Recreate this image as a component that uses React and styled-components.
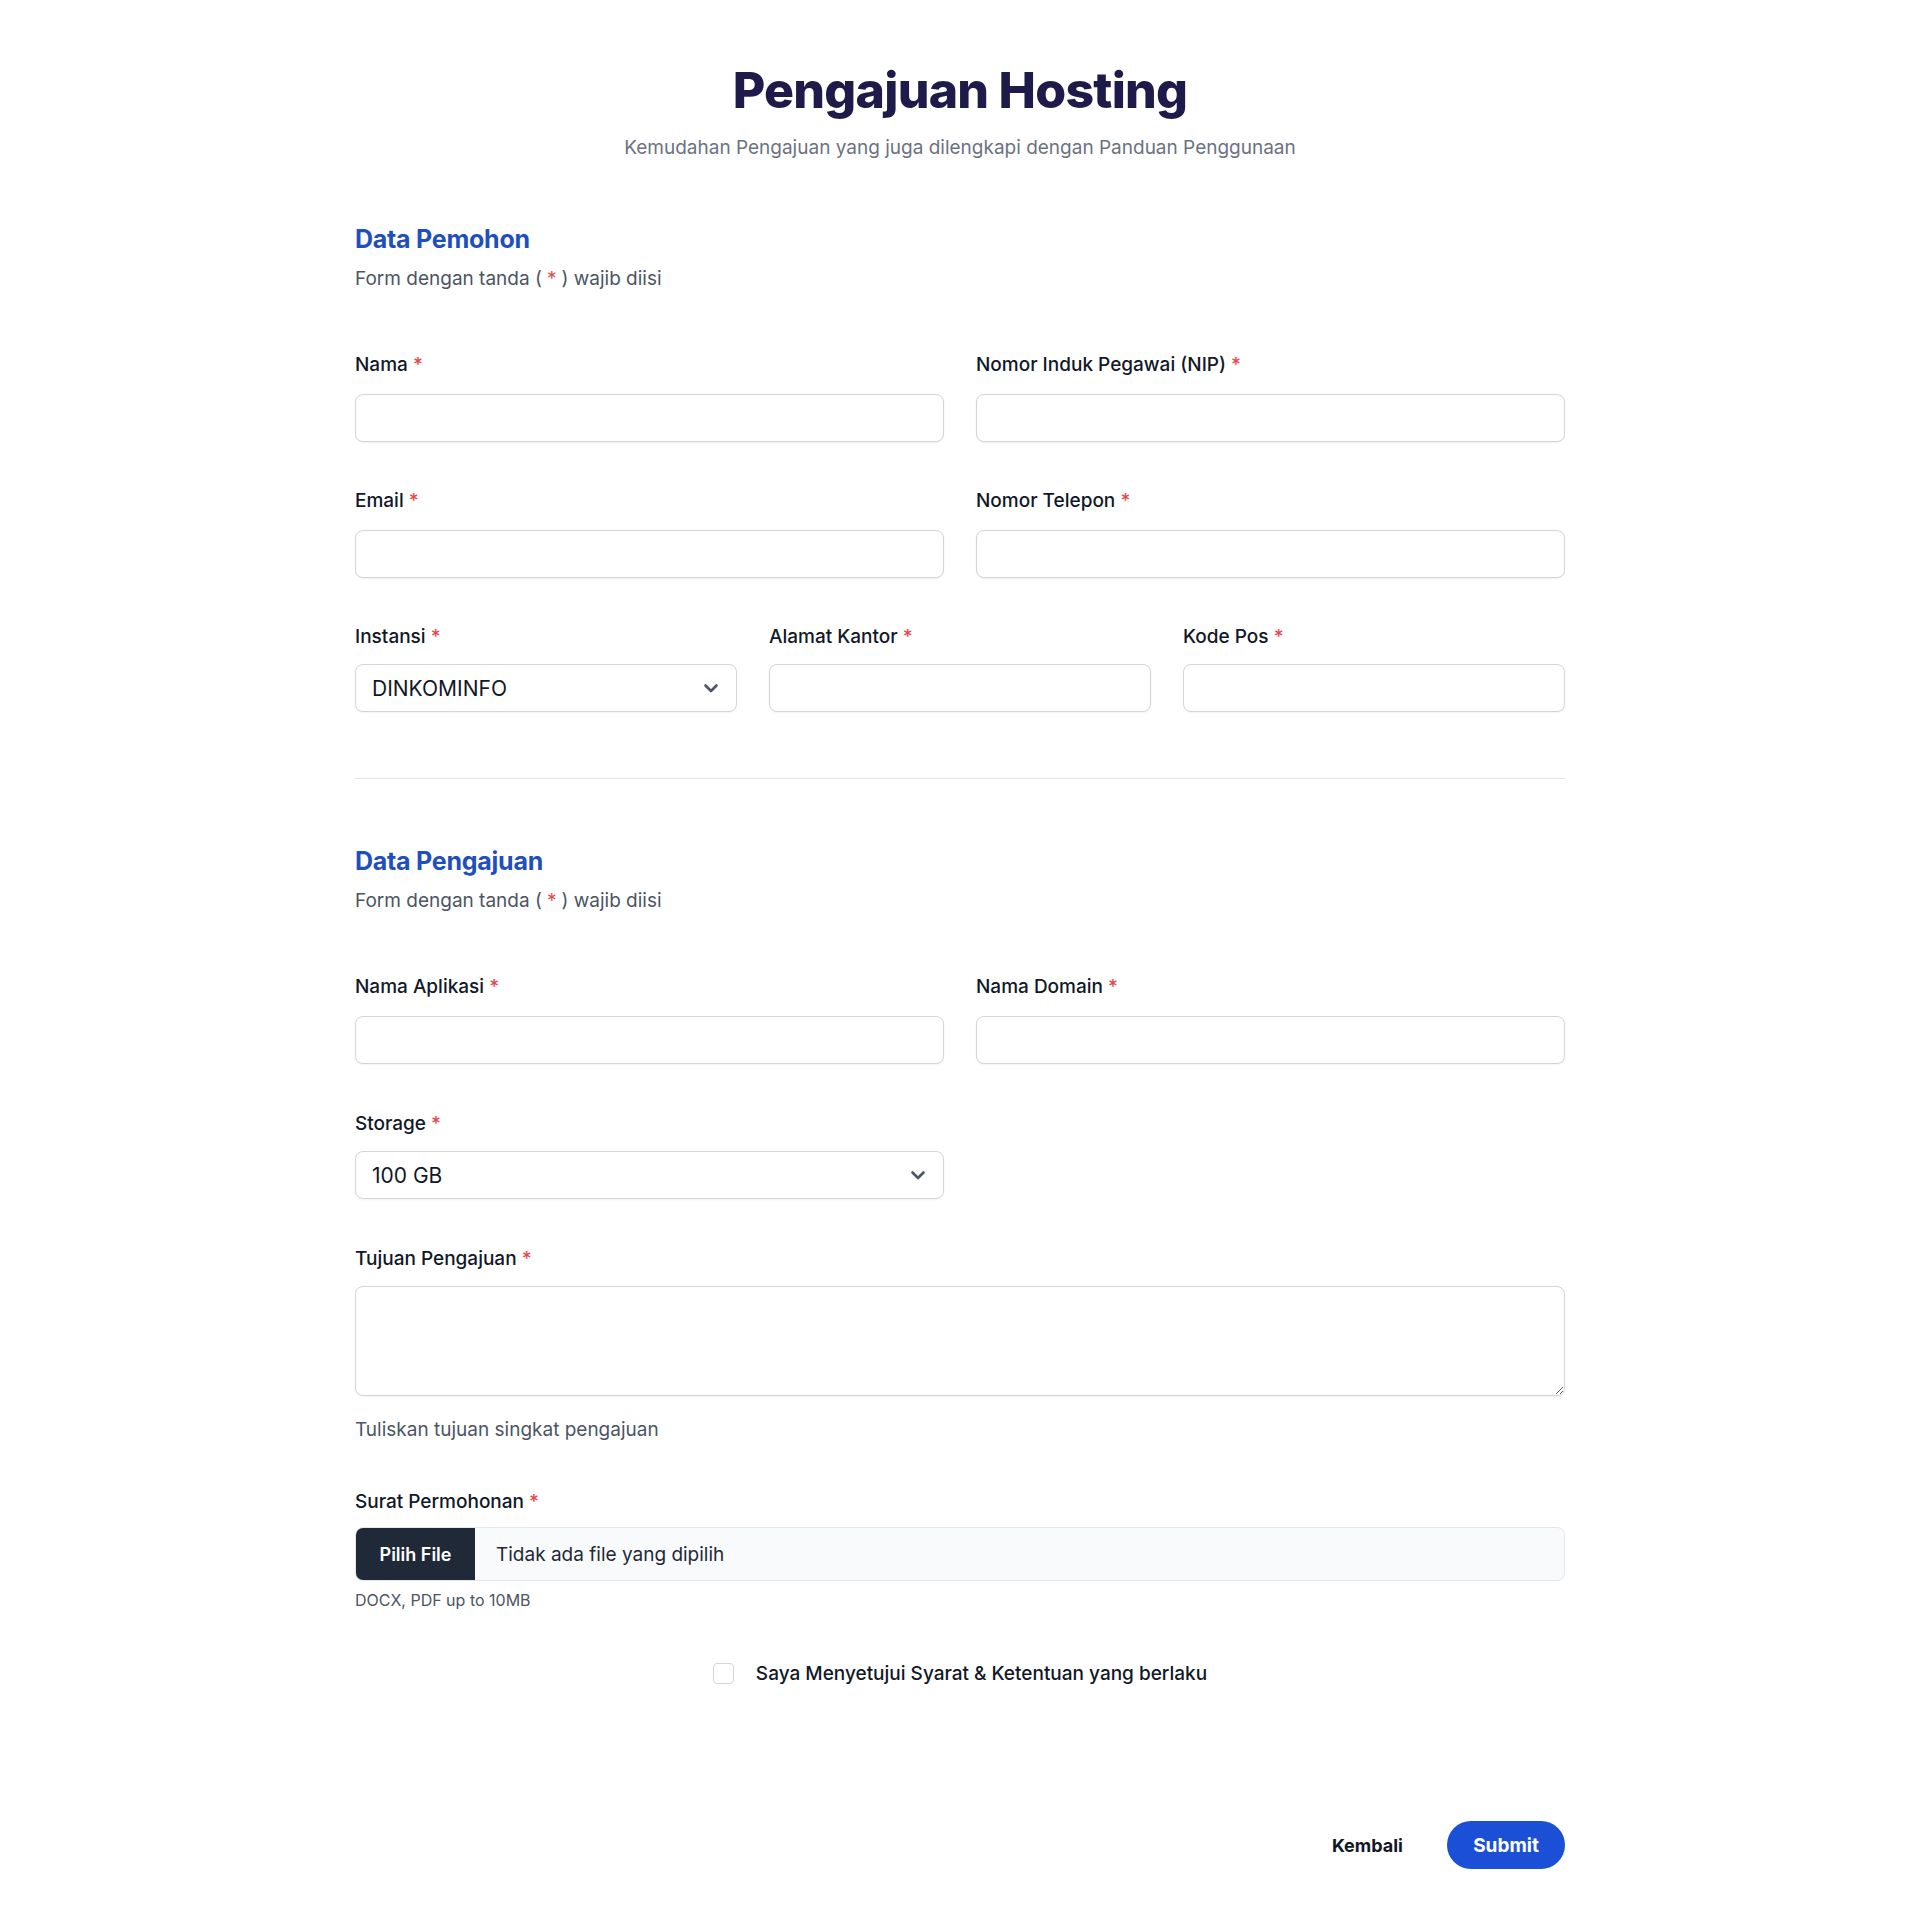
import React from "react";
import styled, { createGlobalStyle } from "styled-components";

const Global = createGlobalStyle`
  html, body { margin: 0; padding: 0; background: #ffffff; }
  body { font-family: Inter, "Noto Sans", "Liberation Sans", sans-serif; color: #111827; }
  * { box-sizing: border-box; }
`;

const Page = styled.main`
  width: 1210px;
  margin: 0 auto;
  padding: 61px 0 43px;
  display: flex;
  flex-direction: column;
`;

const Header = styled.header`
  display: flex;
  flex-direction: column;
  align-items: center;
  gap: 17px;
  margin-bottom: 63px;
`;

const Title = styled.h1`
  margin: 0;
  font-size: 50px;
  line-height: 58px;
  font-weight: 800;
  letter-spacing: -0.015em;
  color: #1e1b4b;
`;

const Subtitle = styled.p`
  margin: 0;
  font-size: 19px;
  line-height: 24px;
  color: #6b7280;
`;

const Section = styled.section`
  display: flex;
  flex-direction: column;
`;

const SectionTitle = styled.h2`
  margin: 0;
  font-size: 25px;
  line-height: 32px;
  font-weight: 700;
  color: #1f4fbf;
  letter-spacing: -0.01em;
`;

const SectionNote = styled.p`
  margin: 12px 0 62px;
  font-size: 19px;
  line-height: 24px;
  color: #4b5563;
`;

const Star = styled.span`
  color: #e5484d;
  margin: 0 ${(p) => (p.$inline ? "5px" : "0")};
`;

const Grid = styled.div`
  display: grid;
  grid-template-columns: repeat(${(p) => p.$cols}, 1fr);
  column-gap: 32px;
  row-gap: ${(p) => p.$gap || 47}px;
  margin-bottom: ${(p) => p.$mb || 0}px;
`;

const Field = styled.div`
  display: flex;
  flex-direction: column;
  grid-column: span ${(p) => p.$span || 1};
`;

const Label = styled.label`
  font-size: 19px;
  line-height: 24px;
  font-weight: 500;
  color: #111827;
  margin-bottom: ${(p) => p.$mb ?? 17}px;
`;

const Input = styled.input`
  height: 48px;
  width: 100%;
  border: 1px solid #d1d5db;
  border-radius: 8px;
  background: #fff;
  box-shadow: 0 1px 2px rgba(0, 0, 0, 0.05);
  padding: 0 16px;
  font-family: inherit;
  font-size: 20px;
  outline: none;
`;

const SelectWrap = styled.div`
  height: 48px;
  border: 1px solid #d1d5db;
  border-radius: 8px;
  background: #fff;
  box-shadow: 0 1px 2px rgba(0, 0, 0, 0.05);
  display: flex;
  align-items: center;
  justify-content: space-between;
  padding: 0 15px 0 16px;
  font-size: 21px;
  color: #111827;
`;

const Chevron = () => (
  <svg width="20" height="20" viewBox="0 0 20 20" fill="none">
    <path d="M4.5 7.5l5.5 5.5 5.5-5.5" stroke="#4b5563" strokeWidth="2.6" strokeLinecap="round" strokeLinejoin="round" />
  </svg>
);

const Select = ({ value }) => (
  <SelectWrap>
    <span>{value}</span>
    <Chevron />
  </SelectWrap>
);

const Divider = styled.hr`
  border: none;
  border-top: 1px solid #e5e7eb;
  margin: 66px 0 66px;
`;

const TextArea = styled.textarea`
  height: 110px;
  width: 100%;
  border: 1px solid #d1d5db;
  border-radius: 8px;
  box-shadow: 0 1px 2px rgba(0, 0, 0, 0.05);
  font-family: inherit;
  font-size: 18px;
  padding: 12px 16px;
  resize: vertical;
  outline: none;
  display: block;
`;

const Helper = styled.p`
  margin: 22px 0 0;
  font-size: 19px;
  line-height: 24px;
  color: #4b5563;
`;

const FileBox = styled.div`
  height: 54px;
  display: flex;
  align-items: center;
  border: 1px solid #e5e7eb;
  border-radius: 8px;
  background: #f9fafb;
  overflow: hidden;
`;

const FileButton = styled.span`
  height: 100%;
  width: 119px;
  background: #1f2937;
  color: #fff;
  font-size: 18px;
  font-weight: 600;
  display: flex;
  align-items: center;
  justify-content: center;
`;

const FileText = styled.span`
  margin-left: 21px;
  font-size: 19px;
  color: #1f2937;
`;

const Small = styled.p`
  margin: 9px 0 0;
  font-size: 16px;
  line-height: 20px;
  color: #4b5563;
`;

const Agree = styled.label`
  display: flex;
  align-items: center;
  justify-content: center;
  gap: 22px;
  margin-top: 52px;
  font-size: 19px;
  font-weight: 500;
  color: #111827;
`;

const Box = styled.span`
  width: 21px;
  height: 21px;
  border: 1px solid #d1d5db;
  border-radius: 4px;
  background: #fff;
`;

const Actions = styled.div`
  display: flex;
  justify-content: flex-end;
  align-items: center;
  gap: 44px;
  margin-top: 136px;
`;

const TextButton = styled.button`
  border: none;
  background: none;
  font-family: inherit;
  font-size: 18px;
  font-weight: 700;
  color: #111827;
  padding: 0;
  cursor: pointer;
`;

const PrimaryButton = styled.button`
  border: none;
  background: #1a4fd6;
  color: #fff;
  font-family: inherit;
  font-size: 19px;
  font-weight: 700;
  height: 48px;
  width: 118px;
  border-radius: 999px;
  cursor: pointer;
`;

const Req = () => <Star>*</Star>;

const F = ({ label, span, labelGap, children }) => (
  <Field $span={span}>
    <Label $mb={labelGap}>
      {label} <Req />
    </Label>
    {children || <Input />}
  </Field>
);

export default function App() {
  return (
    <>
      <Global />
      <Page>
        <Header>
          <Title>Pengajuan Hosting</Title>
          <Subtitle>Kemudahan Pengajuan yang juga dilengkapi dengan Panduan Penggunaan</Subtitle>
        </Header>

        <Section>
          <SectionTitle>Data Pemohon</SectionTitle>
          <SectionNote>
            Form dengan tanda (<Star $inline>*</Star>) wajib diisi
          </SectionNote>
          <Grid $cols={2} $mb={47}>
            <F label="Nama" />
            <F label="Nomor Induk Pegawai (NIP)" />
            <F label="Email" />
            <F label="Nomor Telepon" />
          </Grid>
          <Grid $cols={3}>
            <F label="Instansi" labelGap={15}>
              <Select value="DINKOMINFO" />
            </F>
            <F label="Alamat Kantor" labelGap={15} />
            <F label="Kode Pos" labelGap={15} />
          </Grid>
        </Section>

        <Divider />

        <Section>
          <SectionTitle>Data Pengajuan</SectionTitle>
          <SectionNote>
            Form dengan tanda (<Star $inline>*</Star>) wajib diisi
          </SectionNote>
          <Grid $cols={2} $gap={48}>
            <F label="Nama Aplikasi" />
            <F label="Nama Domain" />
            <F label="Storage" labelGap={15}>
              <Select value="100 GB" />
            </F>
            <div />
            <F label="Tujuan Pengajuan" labelGap={15} span={2}>
              <TextArea />
              <Helper>Tuliskan tujuan singkat pengajuan</Helper>
            </F>
            <F label="Surat Permohonan" labelGap={13} span={2}>
              <FileBox>
                <FileButton>Pilih File</FileButton>
                <FileText>Tidak ada file yang dipilih</FileText>
              </FileBox>
              <Small>DOCX, PDF up to 10MB</Small>
            </F>
          </Grid>
          <Agree>
            <Box />
            Saya Menyetujui Syarat &amp; Ketentuan yang berlaku
          </Agree>
        </Section>

        <Actions>
          <TextButton>Kembali</TextButton>
          <PrimaryButton>Submit</PrimaryButton>
        </Actions>
      </Page>
    </>
  );
}
